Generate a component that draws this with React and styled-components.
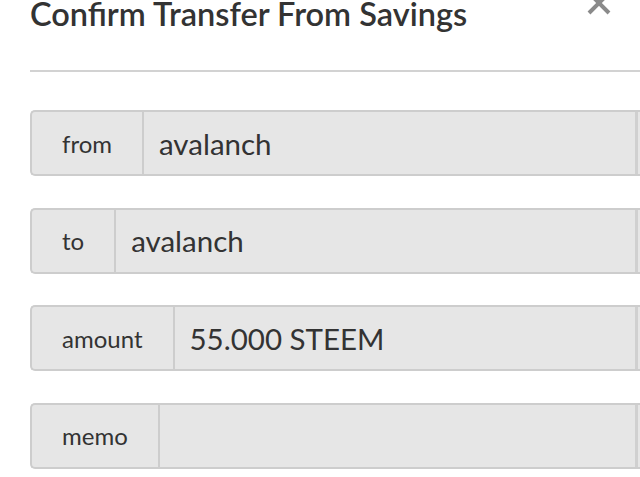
import React from "react";
import styled, { createGlobalStyle } from "styled-components";

const Global = createGlobalStyle`
  html, body { margin: 0; padding: 0; background: #fff; }
  body { overflow: hidden; width: 640px; height: 477px; font-family: Lato, "Open Sans", sans-serif; }
`;

const Modal = styled.div`
  position: relative;
  display: flex;
  flex-direction: column;
  padding: 0 0 0 30px;
  width: 640px;
  box-sizing: border-box;
`;

const Header = styled.div`
  position: relative;
  display: flex;
  align-items: flex-start;
  height: 70px;
`;

const Title = styled.h3`
  margin: -6px 0 0 0;
  font-size: 32.5px;
  line-height: 40px;
  font-weight: 600;
  color: #333;
  letter-spacing: 0;
`;

const Close = styled.button`
  position: absolute;
  right: 29px;
  top: -9px;
  width: 24px;
  height: 24px;
  padding: 0;
  border: 0;
  background: none;
  color: #8a8a8a;
  svg { display: block; }
`;

const Divider = styled.hr`
  margin: 0 0 38px 0;
  border: 0;
  height: 2px;
  background: #d2d2d2;
`;

const Form = styled.div`
  display: flex;
  flex-direction: column;
  gap: 31.5px;
`;

const Group = styled.div`
  display: flex;
  height: 66px;
  box-sizing: border-box;
  border: 2px solid #cdcdcd;
  border-right: 0;
  border-radius: 5px 0 0 5px;
  background: #e6e6e6;
  overflow: hidden;
`;

const Addon = styled.div`
  display: flex;
  align-items: center;
  padding: 0 30px;
  border-right: 2px solid #cdcdcd;
  font-size: 24px;
  color: #333;
`;

const Field = styled.div`
  flex: 1;
  display: flex;
  align-items: center;
  padding: 0 15px;
  font-size: 29.5px;
  color: #333;
  border-right: 3px solid #d0d0d0;
  margin-right: 2px;
`;

const rows = [
  ["from", "avalanch"],
  ["to", "avalanch"],
  ["amount", "55.000 STEEM"],
  ["memo", ""],
];

export default function App() {
  return (
    <>
      <Global />
      <Modal>
        <Header>
          <Title>Confirm Transfer From Savings</Title>
          <Close aria-label="close">
            <svg width="24" height="24" viewBox="0 0 24 24">
              <path d="M2 2 L22 22 M22 2 L2 22" stroke="currentColor" strokeWidth="4" />
            </svg>
          </Close>
        </Header>
        <Divider />
        <Form>
          {rows.map(([l, v]) => (
            <Group key={l}>
              <Addon>{l}</Addon>
              <Field>{v}</Field>
            </Group>
          ))}
        </Form>
      </Modal>
    </>
  );
}
